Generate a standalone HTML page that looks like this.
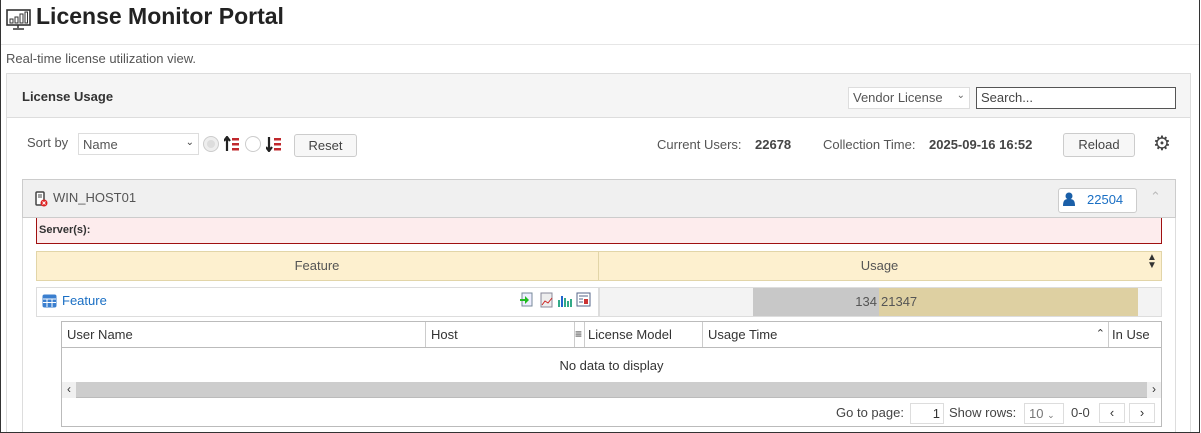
<!DOCTYPE html>
<html><head><meta charset="utf-8"><style>
*{box-sizing:border-box;margin:0;padding:0}
html,body{width:1201px;height:433px;overflow:hidden}
body{background:#fff;font-family:"Liberation Sans",sans-serif;font-size:13px;color:#333;position:relative}
#w{position:absolute;left:0;top:0;width:1201px;height:433px;overflow:hidden}
.a{position:absolute}
.frame{left:0;top:0;width:1200px;height:433px;border:1px solid #333;border-top:none;z-index:5}
.btn{border:1px solid #ccc;border-radius:3px;background:#f7f7f7;text-align:center;color:#444;font-size:13px}
.sel{border:1px solid #ddd;background:#fff;color:#555;font-size:13px;padding:3px 4px}
.th{border-right:1px solid #ccc;padding-left:5px;line-height:25px;color:#333}
</style></head><body><div id="w">
<div class="a frame"></div>
<svg class="a" style="left:6px;top:9px" width="25" height="21" viewBox="0 0 25 21"><rect x="1" y="1" width="23" height="15" fill="none" stroke="#333" stroke-width="1.6"/><rect x="4" y="10" width="3" height="4" fill="none" stroke="#333"/><rect x="9" y="8" width="3" height="6" fill="none" stroke="#333"/><rect x="14" y="5" width="3" height="9" fill="none" stroke="#333"/><rect x="19" y="3" width="2.5" height="11" fill="none" stroke="#333"/><path d="M12 16v3M7 20h11" stroke="#333" stroke-width="1.5"/></svg>
<div class="a" style="left:36px;top:3px;font-size:23px;font-weight:bold;color:#222">License Monitor Portal</div>
<div class="a" style="left:1px;top:44px;width:1198px;height:1px;background:#e6e6e6"></div>
<div class="a" style="left:6px;top:51px;color:#555">Real-time license utilization view.</div>
<div class="a" style="left:6px;top:73px;width:1185px;height:360px;border:1px solid #ddd;border-bottom:none"></div>
<div class="a" style="left:7px;top:74px;width:1183px;height:44px;background:#f5f5f5;border-bottom:1px solid #ddd"></div>
<div class="a" style="left:22px;top:89px;font-weight:bold;color:#333">License Usage</div>
<div class="a sel" style="left:848px;top:87px;width:122px;height:22px;padding:2px 4px">Vendor License <span style="float:right;font-size:10px;color:#666">&#8964;</span></div>
<div class="a" style="left:976px;top:87px;width:200px;height:22px;border:1px solid #555;background:#fff;padding:2px 4px;color:#444">Search...</div>
<div class="a" style="left:27px;top:135px;color:#555">Sort by</div>
<div class="a sel" style="left:78px;top:133px;width:121px;height:22px;padding:3px 4px">Name<span style="float:right;font-size:10px;color:#444">&#8964;</span></div>
<div class="a" style="left:203px;top:136px;width:16px;height:16px;border:1px solid #ccc;border-radius:50%;background:#eee"><div style="margin:3px;width:8px;height:8px;border-radius:50%;background:#ddd"></div></div>
<svg class="a" style="left:224px;top:136px" width="15" height="16"><path d="M3 15V3M0 5l3-4 3 4" stroke="#222" stroke-width="2.2" fill="none"/><rect x="8" y="2" width="7" height="2.5" fill="#c0282d"/><rect x="8" y="7" width="7" height="2.5" fill="#c0282d"/><rect x="8" y="12" width="7" height="2.5" fill="#c0282d"/></svg>
<div class="a" style="left:245px;top:136px;width:16px;height:16px;border:1px solid #ccc;border-radius:50%;background:#fff"></div>
<svg class="a" style="left:266px;top:136px" width="15" height="16"><path d="M3 1v12M0 11l3 4 3-4" stroke="#222" stroke-width="2.2" fill="none"/><rect x="8" y="2" width="7" height="2.5" fill="#c0282d"/><rect x="8" y="7" width="7" height="2.5" fill="#c0282d"/><rect x="8" y="12" width="7" height="2.5" fill="#c0282d"/></svg>
<div class="a btn" style="left:294px;top:134px;width:63px;height:23px;line-height:21px">Reset</div>
<div class="a" style="left:657px;top:137px;color:#555">Current Users:</div>
<div class="a" style="left:755px;top:137px;font-weight:bold;color:#444">22678</div>
<div class="a" style="left:823px;top:137px;color:#555">Collection Time:</div>
<div class="a" style="left:929px;top:137px;font-weight:bold;color:#444">2025-09-16 16:52</div>
<div class="a btn" style="left:1063px;top:133px;width:72px;height:24px;line-height:22px">Reload</div>
<div class="a" style="left:1153px;top:131px;font-size:20px;color:#444">&#9881;</div>
<div class="a" style="left:22px;top:179px;width:1154px;height:254px;border:1px solid #ddd;border-bottom:none"></div>
<div class="a" style="left:22px;top:179px;width:1154px;height:39px;background:#f0f0f0;border:1px solid #ccc"></div>
<svg class="a" style="left:35px;top:191px" width="13" height="16"><rect x="1" y="1" width="8" height="13" rx="1" fill="#fff" stroke="#444" stroke-width="1.5"/><path d="M3 4h4M3 6h4" stroke="#444"/><circle cx="9" cy="12" r="3.5" fill="#d22"/><path d="M7.5 10.5l3 3M10.5 10.5l-3 3" stroke="#fff"/></svg>
<div class="a" style="left:53px;top:190px;color:#555">WIN_HOST01</div>
<div class="a" style="left:1058px;top:188px;width:79px;height:25px;border:1px solid #ccc;border-radius:3px;background:#fff"></div>
<svg class="a" style="left:1063px;top:192px" width="12" height="14"><circle cx="6" cy="4" r="3.5" fill="#1a5fa8"/><path d="M0 14c0-6 2-7 6-7s6 1 6 7z" fill="#1a5fa8"/></svg>
<div class="a" style="left:1087px;top:192px;color:#1a6fc4">22504</div>
<div class="a" style="left:1150px;top:189px;color:#bbb;font-size:13px">&#8963;</div>
<div class="a" style="left:36px;top:218px;width:1126px;height:26px;background:#fdeced;border:1px solid #a01010;border-top:none"></div>
<div class="a" style="left:39px;top:224px;font-size:11px;font-weight:bold;color:#333">Server(s):</div>
<div class="a" style="left:36px;top:251px;width:1126px;height:30px;background:#fdf0cf;border:1px solid #e2d5a8"></div>
<div class="a" style="left:598px;top:252px;width:1px;height:28px;background:#e2d5a8"></div>
<div class="a" style="left:36px;top:258px;width:562px;text-align:center;color:#555">Feature</div>
<div class="a" style="left:598px;top:258px;width:563px;text-align:center;color:#555">Usage</div>
<div class="a" style="left:1147px;top:254px;font-size:10px;color:#333;line-height:8px">&#9650;<br>&#9660;</div>
<div class="a" style="left:36px;top:287px;width:563px;height:30px;border:1px solid #ddd;background:#fff"></div>
<div class="a" style="left:599px;top:287px;width:563px;height:30px;border:1px solid #ddd;background:#f3f3f3"></div>
<div class="a" style="left:753px;top:288px;width:126px;height:28px;background:#c8c8c8;text-align:right;padding-right:2px;line-height:28px;color:#555">134</div>
<div class="a" style="left:879px;top:288px;width:259px;height:28px;background:#ded0a2;padding-left:2px;line-height:28px;color:#555">21347</div>
<svg class="a" style="left:42px;top:294px" width="15" height="14"><rect x="0.5" y="0.5" width="14" height="13" rx="2" fill="#3b7fcf"/><path d="M1 5h13M1 8.5h13M5 5v8M10 5v8" stroke="#fff"/></svg>
<div class="a" style="left:62px;top:293px;color:#1a6fc4">Feature</div>
<svg class="a" style="left:519px;top:292px" width="75" height="16"><rect x="3" y="1" width="10" height="13" fill="#eef" stroke="#789"/><path d="M1 7h5V4l4 4-4 4V9H1z" fill="#2b2"/><rect x="22" y="1" width="11" height="14" fill="#eee" stroke="#889"/><path d="M23 13l3-4 3 2 4-5" stroke="#c22" fill="none"/><path d="M40 15V8M43 15V4M46 15V6M49 15V9M52 15V7" stroke="#3a8" stroke-width="2"/><path d="M43 15V4" stroke="#26c" stroke-width="2"/><rect x="58" y="1" width="13" height="13" fill="#fff" stroke="#568"/><path d="M60 4h9M60 7h4M60 10h4" stroke="#568"/><rect x="65" y="7" width="4" height="5" fill="#c33"/></svg>
<div class="a" style="left:61px;top:321px;width:1101px;height:106px;border:1px solid #bbb;background:#fff"></div>
<div class="a" style="left:62px;top:322px;width:1099px;height:26px;border-bottom:1px solid #bbb;display:flex">
<div class="th" style="width:364px">User Name</div><div class="th" style="width:149px">Host</div><div class="th" style="width:10px;padding:0;font-size:12px;line-height:24px">&#8801;</div><div class="th" style="width:118px;padding-left:3px">License Model</div><div class="th" style="width:406px;position:relative">Usage Time<span style="position:absolute;right:3px;top:0;font-size:11px">&#8963;</span></div><div class="th" style="border:none;padding-left:3px">In Use</div></div>
<div class="a" style="left:62px;top:358px;width:1099px;text-align:center;color:#333">No data to display</div>
<div class="a" style="left:62px;top:382px;width:1099px;height:16px;background:#cdcdcd;border-bottom:1px solid #bbb"></div>
<div class="a" style="left:62px;top:382px;width:14px;height:16px;background:#f0f0f0;font-size:12px;line-height:15px;text-align:center">&#8249;</div>
<div class="a" style="left:1147px;top:382px;width:14px;height:16px;background:#f0f0f0;font-size:12px;line-height:15px;text-align:center">&#8250;</div>
<div class="a" style="left:836px;top:405px;color:#444">Go to page:</div>
<div class="a" style="left:910px;top:403px;width:34px;height:21px;border:1px solid #ddd;text-align:right;padding-right:3px;line-height:19px">1</div>
<div class="a" style="left:949px;top:405px;color:#444">Show rows:</div>
<div class="a" style="left:1024px;top:403px;width:40px;height:21px;border:1px solid #ddd;color:#777;padding-left:4px;line-height:19px">10 <span style="font-size:9px">&#8964;</span></div>
<div class="a" style="left:1071px;top:405px;color:#444">0-0</div>
<div class="a" style="left:1099px;top:403px;width:26px;height:20px;border:1px solid #ddd;text-align:center;line-height:18px">&#8249;</div>
<div class="a" style="left:1129px;top:403px;width:26px;height:20px;border:1px solid #ddd;text-align:center;line-height:18px">&#8250;</div>
</div></body></html>
